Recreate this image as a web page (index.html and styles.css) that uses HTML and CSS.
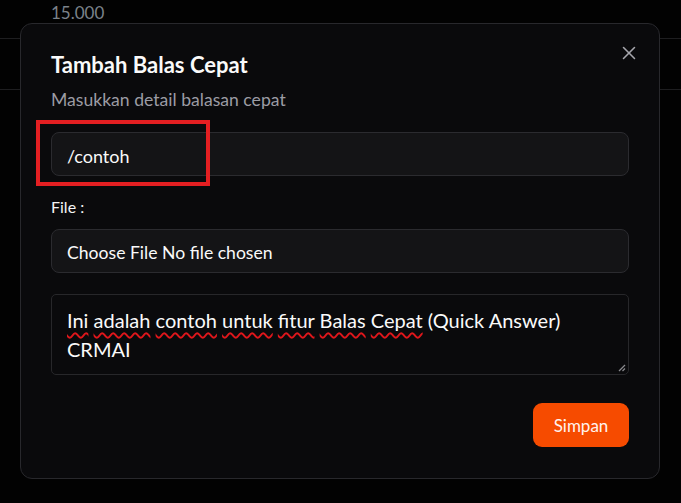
FILE: index.html
```html
<!DOCTYPE html>
<html lang="id">
<head>
    <meta charset="utf-8">
    <meta name="viewport" content="width=681, height=503">
    <title>Tambah Balas Cepat</title>
    <link rel="stylesheet" href="styles.css">
</head>
<body>
    <div class="page">
        <div class="page-row page-row-first">15.000</div>
        <div class="page-row"></div>
    </div>

    <div class="dialog">
        <button class="dialog-close" type="button" aria-label="Tutup">
            <svg width="22" height="22" viewBox="0 0 24 24" fill="none" stroke="currentColor" stroke-width="1.7" stroke-linecap="round">
                <path d="M18 6 6 18"/>
                <path d="m6 6 12 12"/>
            </svg>
        </button>
        <div class="dialog-header">
            <h2 class="dialog-title">Tambah Balas Cepat</h2>
            <p class="dialog-desc">Masukkan detail balasan cepat</p>
        </div>
        <input class="field field-shortcut" type="text" value="/contoh">
        <label class="field-label" for="file">File :</label>
        <div class="field field-file">Choose File No file chosen</div>
        <div class="field-textarea">
            <span class="typo">Ini</span> <span class="typo">adalah</span> <span class="typo">contoh</span> <span class="typo">untuk</span> <span class="typo">fitur</span> <span class="typo">Balas</span> <span class="typo">Cepat</span> (Quick Answer)<br>CRMAI
            <svg class="grip" width="8" height="8" viewBox="0 0 8 8" stroke="#8a8a8e" stroke-width="1.2">
                <path d="M7 1 1 7"/>
                <path d="M7 4.5 4.5 7"/>
            </svg>
        </div>
        <div class="dialog-footer">
            <button class="btn-save" type="button">Simpan</button>
        </div>
    </div>

    <div class="mark"></div>
</body>
</html>
```

FILE: styles.css
```css
* {
    box-sizing: border-box;
}
body {
    margin: 0;
    background-color: #020202;
    font-family: "Lato", "Noto Sans", sans-serif;
    color: #fafafa;
    overflow: hidden;
}
.page-row {
    height: 51px;
    border-bottom: 1px solid #1e1e20;
}
.page-row-first {
    height: 39px;
    padding: 3px 0 0 51px;
    font-size: 17px;
    line-height: 20px;
    color: #7b828a;
}
.dialog {
    position: fixed;
    left: 20px;
    top: 23px;
    width: 640px;
    padding: 27px 30px 31px 30px;
    background-color: #0a0a0c;
    border: 1px solid #28282c;
    border-radius: 12px;
    display: flex;
    flex-direction: column;
}
.dialog-close {
    position: absolute;
    top: 18px;
    right: 19px;
    width: 22px;
    height: 22px;
    padding: 0;
    border: 0;
    background: transparent;
    color: #a6a6ac;
    display: flex;
}
.dialog-header {
    display: flex;
    flex-direction: column;
    gap: 10px;
}
.dialog-title {
    margin: 0;
    font-size: 22px;
    line-height: 28px;
    font-weight: 700;
    color: #fafafa;
}
.dialog-desc {
    margin: 0;
    font-size: 17.6px;
    line-height: 22px;
    color: #9c9ca4;
}
.field {
    height: 44px;
    width: 100%;
    padding: 3px 15px 0 15px;
    background-color: #141416;
    border: 1px solid #2b2b2f;
    border-radius: 8px;
    font-family: inherit;
    font-size: 18px;
    color: #fafafa;
    outline: none;
}
.field-shortcut {
    margin-top: 21px;
}
.field-label {
    margin-top: 20px;
    font-size: 16px;
    line-height: 21px;
    color: #f4f4f5;
}
.field-file {
    margin-top: 12px;
    display: flex;
    align-items: center;
    font-size: 17.6px;
}
.field-textarea {
    position: relative;
    margin-top: 21px;
    height: 81px;
    padding: 11px 15px 0 15px;
    border: 1px solid #27272a;
    border-radius: 5px;
    background-color: #0a0a0c;
    font-size: 20px;
    line-height: 29px;
    color: #fafafa;
}
.typo {
    text-decoration: underline wavy #e0161b;
    text-decoration-thickness: 1.5px;
    text-underline-offset: 4px;
}
.grip {
    position: absolute;
    right: 2px;
    bottom: 2px;
}
.dialog-footer {
    margin-top: 28px;
    display: flex;
    justify-content: flex-end;
}
.btn-save {
    width: 96px;
    height: 44px;
    border: 0;
    border-radius: 9px;
    background-color: #f64b00;
    color: #fff3ee;
    font-family: inherit;
    font-size: 17px;
}
.mark {
    position: absolute;
    left: 36px;
    top: 120px;
    width: 174px;
    height: 66px;
    border: 4px solid #e41f22;
}
```
